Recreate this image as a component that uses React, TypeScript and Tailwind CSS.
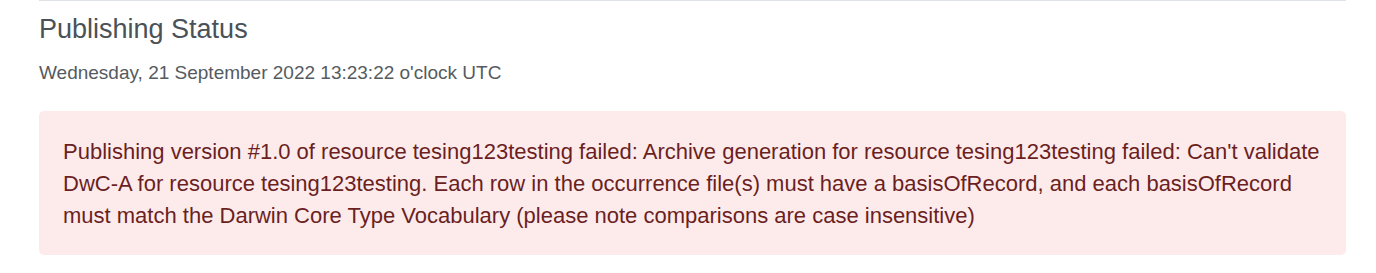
export default function App() {
  return (
    <div className="bg-white w-[1376px] h-[273px] font-['Liberation_Sans',Arial,sans-serif]">
      <div className="ml-[39px] mr-[30px] border-t border-[#dee2e6] pt-[12px]">
        <h2 className="text-[27px] leading-[32px] text-[#4a5258]">Publishing Status</h2>
        <p className="mt-[14px] text-[19px] leading-[28px] text-[#555b61]">
          Wednesday, 21 September 2022 13:23:22 o'clock UTC
        </p>
        <div className="mt-[24px] rounded-[5px] bg-[#fdebeb] px-[24px] pt-[25px] pb-[23px] text-[22px] leading-[32px] text-[#6b1f1f] whitespace-nowrap">
          Publishing version #1.0 of resource tesing123testing failed: Archive generation for resource tesing123testing failed: Can't validate
          <br />
          DwC-A for resource tesing123testing. Each row in the occurrence file(s) must have a basisOfRecord, and each basisOfRecord
          <br />
          must match the Darwin Core Type Vocabulary (please note comparisons are case insensitive)
        </div>
      </div>
    </div>
  );
}
